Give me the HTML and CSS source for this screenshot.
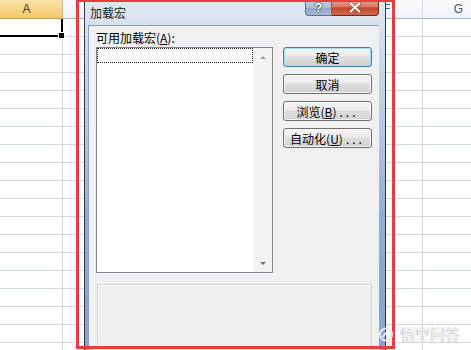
FILE: index.html
```html
<!DOCTYPE html>
<html lang="zh-CN">
<head>
<meta charset="utf-8">
<title>加载宏</title>
<link rel="stylesheet" href="styles.css">
</head>
<body>
<div class="sheet">
  <div class="col-headers">
    <div class="col-head selected">A</div>
    <div class="col-head"></div>
    <div class="col-head"></div>
    <div class="col-head"></div>
    <div class="col-head"></div>
    <div class="col-head">F</div>
    <div class="col-head">G</div>
  </div>
  <div class="grid">
    <div class="sel-cell"><span class="fill-handle"></span></div>
  </div>
</div>

<div class="dialog">
  <div class="titlebar">
    <span class="title">加载宏</span>
    <div class="caption-btns">
      <span class="cap help">?</span>
      <span class="cap close">
        <svg width="14" height="11" viewBox="0 0 14 11"><path d="M2 1.5 L12 9.5 M12 1.5 L2 9.5" stroke="#4a1a10" stroke-width="3.2" stroke-linecap="round" opacity="0.45"/><path d="M2.5 1.5 L11.5 9.5 M11.5 1.5 L2.5 9.5" stroke="#fff" stroke-width="2.2" stroke-linecap="round"/></svg>
      </span>
    </div>
  </div>
  <div class="client">
    <div class="label">可用加载宏(<u>A</u>):</div>
    <div class="main-row">
      <div class="listbox">
        <div class="list-items">
          <div class="focus-row"></div>
        </div>
        <div class="vscroll">
          <span class="arrow up"></span>
          <span class="arrow down"></span>
        </div>
      </div>
      <div class="buttons">
        <button class="btn default">确定</button>
        <button class="btn">取消</button>
        <button class="btn">浏览(<u>B</u>)<span class="dots">...</span></button>
        <button class="btn">自动化(<u>U</u>)<span class="dots">...</span></button>
      </div>
    </div>
    <div class="desc"></div>
  </div>
</div>

<div class="highlight"></div>

<div class="watermark">
  <svg width="16" height="15" viewBox="0 0 16 15"><circle cx="8" cy="7.5" r="6" fill="none" stroke="#fff" stroke-width="2"/><circle cx="8" cy="7.5" r="6" fill="none" stroke="#999" stroke-width="0.6" opacity="0.7"/><path d="M5 10 Q8 4 11 6" fill="none" stroke="#fff" stroke-width="1.8"/></svg>
  <span>悟空问答</span>
</div>
</body>
</html>
```
FILE: styles.css
```css
html, body {
  margin: 0;
  padding: 0;
}
body {
  width: 471px;
  height: 350px;
  overflow: hidden;
  position: relative;
  background: #ffffff;
  font-family: "Noto Sans CJK SC", "Liberation Sans", sans-serif;
  font-size: 12px;
  color: #000;
}

/* spreadsheet */
.sheet {
  margin-left: -9px;
  width: 480px;
  height: 350px;
  display: flex;
  flex-direction: column;
  overflow: hidden;
}
.col-headers {
  display: flex;
  height: 19px;
  flex: none;
}
.col-head {
  flex: none;
  width: 72px;
  height: 19px;
  box-sizing: border-box;
  border-right: 1px solid #d5dde8;
  border-bottom: 1px solid #9eb6ce;
  background: linear-gradient(#fbfcfe, #eef2f8);
  color: #4b5563;
  font-family: "Liberation Sans", "DejaVu Sans", sans-serif;
  font-size: 12px;
  line-height: 18px;
  text-align: center;
}
.col-head.selected {
  background: linear-gradient(#fbe3ac, #f4c667);
  border-bottom-color: #c5a05a;
  border-right-color: #c9b690;
  color: #4a3c12;
}
.grid {
  flex: 1;
  background-image:
    linear-gradient(to right, transparent 71px, #d0d7e5 71px),
    linear-gradient(to bottom, transparent 17px, #d0d7e5 17px);
  background-size: 72px 100%, 100% 18px;
}
.sel-cell {
  position: relative;
  width: 72px;
  height: 18px;
  box-sizing: border-box;
  border-right: 2px solid #000;
  border-bottom: 2px solid #000;
  background: #fff;
}
.fill-handle {
  position: absolute;
  right: -4px;
  bottom: -4px;
  width: 5px;
  height: 5px;
  background: #000;
  border: 1px solid #fff;
}

/* dialog window */
.dialog {
  position: absolute;
  left: 84px;
  top: 0;
  width: 302px;
  height: 362px;
  box-sizing: border-box;
  border: 1px solid #26355a;
  border-top: none;
  background: linear-gradient(to bottom, #dfe6ef 0%, #d3dde9 12%, #b8c8df 35%, #93acd2 60%, #87a2cd 100%);
  display: flex;
  flex-direction: column;
}
.titlebar {
  height: 25px;
  flex: none;
  position: relative;
  padding-left: 5px;
}
.title {
  line-height: 25px;
  font-size: 12px;
  color: #1a1a1a;
}
.caption-btns {
  position: absolute;
  top: 0;
  right: 6px;
  display: flex;
}
.cap {
  height: 16px;
  box-sizing: border-box;
  display: flex;
  align-items: center;
  justify-content: center;
  color: #fff;
  font-family: "Liberation Sans", sans-serif;
  font-weight: bold;
  font-size: 13px;
  text-shadow: 0 0 2px #223, 0 0 1px #223;
}
.cap.help {
  width: 27px;
  border: 1px solid #5d6f8c;
  border-top: none;
  border-radius: 0 0 0 4px;
  background: linear-gradient(#c7d3e3, #a9b9cf 50%, #93a6c2 51%, #a6b8d2);
}
.cap.close {
  width: 47px;
  border: 1px solid #6b2a1e;
  border-top: none;
  border-left: none;
  border-radius: 0 0 4px 0;
  background: linear-gradient(#e7a797, #d67a62 45%, #c2452a 52%, #d0694c);
}
.client {
  flex: 1;
  margin: 0 6px 0 3px;
  border-left: 1px solid #8d9db6;
  border-top: 1px solid #8d9db6;
  background: #f0f0f0;
  padding: 5px 0 0 7px;
}
.label {
  line-height: 14px;
  height: 14px;
  margin-bottom: 2px;
  font-size: 12px;
}
.main-row {
  display: flex;
  align-items: flex-start;
}
.listbox {
  width: 177px;
  height: 226px;
  box-sizing: border-box;
  border: 1px solid #7e838c;
  background: #fff;
  display: flex;
  box-shadow: 1px 1px 0 #ffffff;
}
.list-items {
  flex: 1;
}
.focus-row {
  height: 15px;
  box-sizing: border-box;
  border: 1px dotted #222;
}
.vscroll {
  width: 18px;
  background: #f3f3f3;
  border-left: 1px solid #f8f8f8;
  display: flex;
  flex-direction: column;
  justify-content: space-between;
  align-items: center;
  padding: 8px 0 7px;
}
.arrow {
  width: 0;
  height: 0;
  border-left: 3px solid transparent;
  border-right: 3px solid transparent;
}
.arrow.up {
  border-bottom: 3px solid #9a9a9a;
}
.arrow.down {
  border-top: 3px solid #6f6f6f;
}
.buttons {
  margin-left: 10px;
  width: 89px;
  display: flex;
  flex-direction: column;
  gap: 7px;
}
.btn {
  height: 20px;
  width: 89px;
  box-sizing: border-box;
  border: 1px solid #707070;
  border-radius: 3px;
  background: linear-gradient(#f4f4f4, #ececec 45%, #dddddd 50%, #d2d2d2);
  font-family: "Noto Sans CJK SC", "Liberation Sans", sans-serif;
  font-size: 12px;
  line-height: 17px;
  padding: 0;
  color: #000;
  text-align: center;
  box-shadow: inset 0 0 0 1px rgba(255,255,255,0.7);
}
.btn.default {
  border-color: #3c7fb1;
  box-shadow: inset 0 0 0 1px #a6dcf6;
}
.dots {
  letter-spacing: 3px;
  margin-left: 3px;
}
.desc {
  margin-top: 11px;
  margin-left: 1px;
  width: 275px;
  height: 80px;
  box-sizing: border-box;
  border: 1px solid #d4d4d4;
  box-shadow: inset 1px 1px 0 #fafafa;
  background: #efefef;
}

/* annotation */
.highlight {
  position: absolute;
  left: 76px;
  top: 0;
  width: 319px;
  height: 349px;
  box-sizing: border-box;
  border: 3px solid #ea3b40;
  border-top-width: 2px;
}

.watermark {
  position: absolute;
  left: 378px;
  top: 326px;
  display: flex;
  align-items: center;
  gap: 6px;
  color: rgba(255,255,255,0.92);
  font-size: 15px;
  line-height: 16px;
  text-shadow: 0 0 1px rgba(80,80,80,0.8);
}
```
